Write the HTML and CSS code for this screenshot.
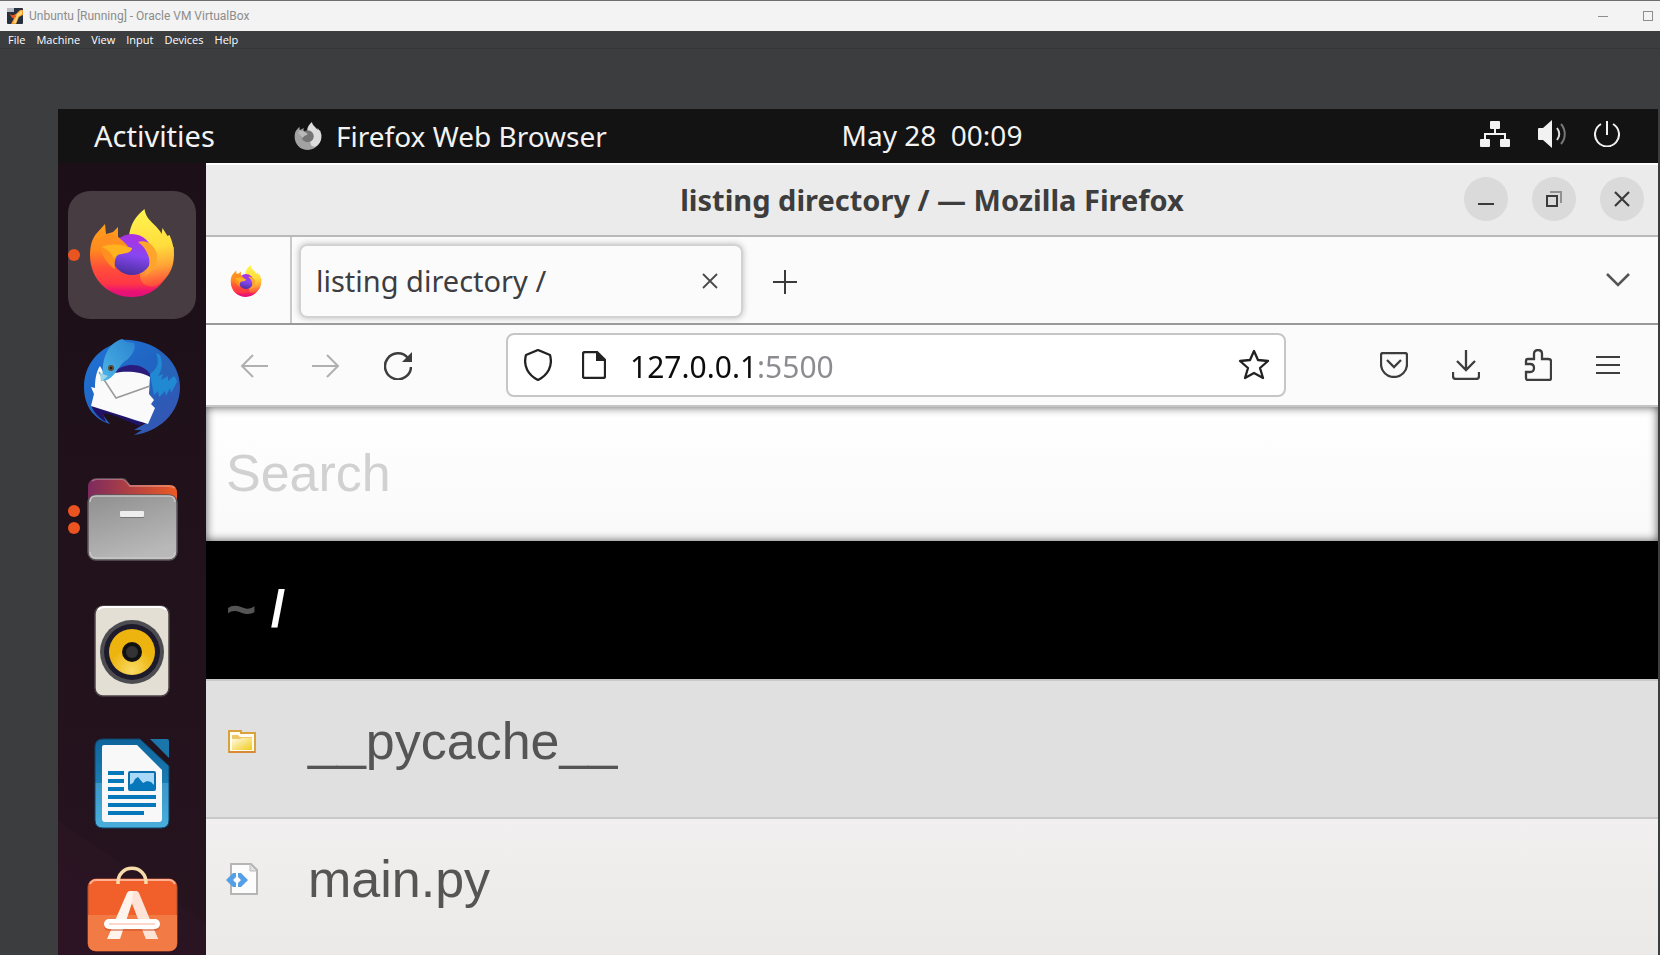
FILE: index.html
```html
<!DOCTYPE html>
<html lang="en">
<head>
<meta charset="utf-8">
<title>Unbuntu [Running] - Oracle VM VirtualBox</title>
<link rel="stylesheet" href="styles.css">
</head>
<body>
<svg class="defs" width="0" height="0" aria-hidden="true">
  <defs>
    <linearGradient id="ff-body" x1="0" y1="0" x2="0" y2="1"><stop offset="0" stop-color="#ffa01c"/><stop offset=".35" stop-color="#ff8a1f"/><stop offset=".6" stop-color="#ff5038"/><stop offset=".82" stop-color="#ff3647"/><stop offset=".92" stop-color="#ea1272"/><stop offset="1" stop-color="#e3107c"/></linearGradient>
    <linearGradient id="ff-flame" x1="0.4" y1="0" x2="0.5" y2="1"><stop offset="0" stop-color="#fff44f"/><stop offset=".5" stop-color="#ffdd3c"/><stop offset=".75" stop-color="#ffa636"/><stop offset="1" stop-color="#ff4a3c"/></linearGradient>
    <linearGradient id="ff-globe" x1="0.6" y1="0" x2="0.4" y2="1"><stop offset="0" stop-color="#b12fe0"/><stop offset=".5" stop-color="#8746f2"/><stop offset="1" stop-color="#4a2f9c"/></linearGradient>
    <symbol id="firefox" viewBox="20 16 88 92">
      <path fill="url(#ff-body)" d="M64 106C40 106 22 88 22 64c0-9 2-16 6-21l9-10 1 10c3-1 5-1 7-2l5-5v10l14 10h42c0 29-18 50-42 50z"/>
      <path fill="url(#ff-flame)" d="M61 46c1-13 7-21 15.500-28 1 7 4 10 9 15 4 4 7 7 8 10l1-6 5 8 2-1c3 7 4.500 13 4.500 20 0 14-7 25-18 31-10 2-16-3-16-11z"/>
      <circle cx="64" cy="63.500" r="20.500" fill="url(#ff-globe)"/>
      <path fill="#ffa52c" d="M70 51c9-3 17 4 19 12 1 9-4 18-13 22 6-7 7-16 3-23-2-5-5-8-9-11z"/>
      <path fill="#ff901f" d="M30 50c5-8 13-8 20-4 4 3 7 6 10 9l-9 7c-4 4-5 10-4 16-9-5-14-16-17-28z"/>
      <path fill="#ffb320" d="M34 56c5-3 13-3 20-2l10 3c0 4-5 5-10 6-4 0-6 2-8 5-2-5-5-9-12-12z"/>
    </symbol>
  </defs>
</svg>

<div class="host">
  <header class="host-title">
    <svg class="host-logo" viewBox="0 0 16 16" aria-hidden="true"><rect width="16" height="16" rx="1" fill="#26303f"/><path d="M0 0h7v4H0z" fill="#b9bcc2"/><path d="M2 5c2 3 5 3 7 1l4-4h3v5l-4 2-3 7H4l3-6z" fill="#f39a2c"/><path d="M10 6l5-4v4l-4 3-2 6H6l3-6z" fill="#ffd27a"/><path d="M2 5c2 3 5 3 6 1l1 3-4 1z" fill="#e8541e"/></svg>
    <span class="host-name">Unbuntu [Running] - Oracle VM VirtualBox</span>
    <button class="host-btn" aria-label="Minimize window"><svg width="10" height="10" viewBox="0 0 10 10"><path d="M0 5.500h10" stroke="#8d8d8d"/></svg></button>
    <button class="host-btn" aria-label="Maximize window"><svg width="10" height="10" viewBox="0 0 10 10"><rect x=".5" y=".5" width="9" height="9" fill="none" stroke="#8d8d8d"/></svg></button>
  </header>
  <nav class="host-menu">
    <button>File</button><button>Machine</button><button>View</button><button>Input</button><button>Devices</button><button>Help</button>
  </nav>

  <main class="vm">
    <div class="topbar">
      <button class="activities">Activities</button>
      <button class="app-menu">
        <svg width="28" height="30" viewBox="20 16 88 92" aria-hidden="true"><path fill="#a2a2a2" d="M64 106C40 106 22 88 22 64c0-9 2-16 6-21l9-10 1 10c3-1 5-1 7-2l5-5v10l14 10h42c0 29-18 50-42 50z"/><path fill="#dcdcdc" d="M61 46c1-13 7-21 15.500-28 1 7 4 10 9 15 4 4 7 7 8 10l1-6 5 8 2-1c3 7 4.500 13 4.500 20 0 14-7 25-18 31-10 2-16-3-16-11z"/><circle cx="63" cy="63" r="19" fill="#747474"/><path fill="#b9b9b9" d="M32 52c6-8 13-7 20-4l11 7c0 5-12 4-16 14-3-5-7-10-15-17z"/></svg>
        <span>Firefox Web Browser</span>
      </button>
      <time class="clock">May 28&nbsp; 00:09</time>
      <div class="status">
        <svg width="30" height="26" viewBox="0 0 30 26" role="img" aria-label="Network"><path fill="#f2f2f2" d="M11 0h8a1 1 0 0 1 1 1v6a1 1 0 0 1-1 1h-3v4h10v6h3a1 1 0 0 1 1 1v6a1 1 0 0 1-1 1h-8a1 1 0 0 1-1-1v-6a1 1 0 0 1 1-1h3v-4H6v4h3a1 1 0 0 1 1 1v6a1 1 0 0 1-1 1H1a1 1 0 0 1-1-1v-6a1 1 0 0 1 1-1h3v-6h10V8h-3a1 1 0 0 1-1-1V1a1 1 0 0 1 1-1z"/></svg>
        <svg width="28" height="28" viewBox="0 0 28 28" role="img" aria-label="Volume"><path fill="#f2f2f2" d="M1 8h4l9-8v28l-9-8H1a1 1 0 0 1-1-1V9a1 1 0 0 1 1-1z"/><path d="M19 8c3 4 3 8 0 12" fill="none" stroke="#ddd" stroke-width="2"/><path d="M23 4c5 6 5 14 0 20" fill="none" stroke="#777" stroke-width="2"/></svg>
        <svg width="26" height="26" viewBox="0 0 26 26" role="img" aria-label="Power"><path d="M7 3a12 12 0 1 0 12 0M13 0v14" fill="none" stroke="#f2f2f2" stroke-width="2"/></svg>
      </div>
    </div>

    <div class="desktop">
      <aside class="dock">
        <button class="dock-item active" aria-label="Firefox">
          <span class="dots"><i></i></span>
          <svg width="128" height="128" viewBox="0 0 128 128"><use href="#firefox" x="20" y="16" width="88" height="92"/></svg>
        </button>
        <button class="dock-item" aria-label="Thunderbird">
          <svg width="128" height="128" viewBox="0 0 128 128">
            <defs><linearGradient id="tb" x1="0" y1="0" x2="1" y2="1"><stop offset="0" stop-color="#1f75d8"/><stop offset=".5" stop-color="#2163c0"/><stop offset="1" stop-color="#3a52ad"/></linearGradient><linearGradient id="tbh" x1="1" y1="0" x2="0" y2="1"><stop offset="0" stop-color="#2a83cf"/><stop offset="1" stop-color="#4cb4e6"/></linearGradient></defs>
            <path fill="url(#tb)" d="M53 17c30-2 59 18 59 47 0 27-22 45-46 48l8-5h-8l12-7c-20-2-30-8-46-16 2 7 5 11 10 17C25 96 16 82 16 64c0-22 14-38 33-44z"/>
            <path fill="#211265" d="M23 82c10 4 24 6 36 12 8 4 14 6 20 4l-8 5C52 95 42 90 35 91l3 8c-7-4-12-9-15-17z"/>
            <path fill="#2b1b7c" d="M46 49c12-11 30-8 36 2v13L60 54z"/>
            <path fill="#fafafa" d="M32 43l6 11c9-7 33-7 44 0l-1 17 5 6-3 4 4 4-7 16-57-18 3-12-3-7 4 1c0-8 1-16 5-22z"/>
            <path d="M31 49l17 26 34-12" fill="none" stroke="#999" stroke-width="1.500"/>
            <path fill="url(#tbh)" d="M35 58c-2-20 3-37 19-42l5 3 7 1c3 6-3 13-7 17-9 4-11 19-24 21z"/>
            <path fill="#9ad5ea" d="M32 50l8 3-7 6z"/>
            <circle cx="43" cy="45" r="3" fill="#5a4b35"/><circle cx="43" cy="45" r="1" fill="#111"/>
            <path fill="#2188d2" d="M88 30c4 10 1 16-6 21l2 11 2 10 4-4 1 6 6-6 1 5 4-8 1 5 6-11c-3-16-9-25-21-29z"/>
            <path fill="#2763b9" d="M88 26c8 9 7 20 2 27l5-2-2 6 7-4v5l6-5 5 7c-2-15-10-27-23-34z"/>
          </svg>
        </button>
        <button class="dock-item" aria-label="Files">
          <span class="dots"><i></i><i></i></span>
          <svg width="128" height="128" viewBox="0 0 128 128">
            <defs><linearGradient id="fb" x1="0" x2="1"><stop offset="0" stop-color="#7c2a5e"/><stop offset="1" stop-color="#ec5a24"/></linearGradient><linearGradient id="fg" x1="0" y1="0" x2=".4" y2="1"><stop offset="0" stop-color="#8f8f8f"/><stop offset="1" stop-color="#b8b8b8"/></linearGradient></defs>
            <path fill="url(#fb)" d="M20 32q0-8 8-8h26q3 0 5 3l3 3h39q8 0 8 8v22H20z"/><path d="M24 26q2-2 5-2h25q3 0 5 3l3 4h39q4 0 6 2" fill="none" stroke="#fff" stroke-opacity=".25" stroke-width="2"/>
            <rect x="20" y="40" width="89" height="65" rx="8" fill="url(#fg)" stroke="#5c5759" stroke-width="1.500"/>
            <path d="M22 47q0-6 6-6h73q6 0 6 6M22 97q0 6 6 6h73q6 0 6-6" fill="none" stroke="#c8c8c8" stroke-width="1.500"/>
            <rect x="52" y="57" width="24" height="6" rx="1" fill="#777"/><rect x="52" y="56" width="24" height="6" rx="1" fill="#eee"/>
          </svg>
        </button>
        <button class="dock-item" aria-label="Rhythmbox">
          <svg width="128" height="128" viewBox="0 0 128 128">
            <defs><radialGradient id="rb" cy=".9"><stop offset="0" stop-color="#fadb63"/><stop offset="1" stop-color="#edb40f"/></radialGradient></defs>
            <rect x="27" y="19" width="74" height="90" rx="8" fill="#e4dfd5" stroke="#4d4447" stroke-width="1.500"/><path d="M30 23q2-3 6-3h56q4 0 6 3" fill="none" stroke="#fff" stroke-width="2"/>
            <circle cx="64" cy="65" r="32" fill="#4d4d51"/><circle cx="64" cy="65" r="28" fill="#1d1b2b"/><circle cx="64" cy="65" r="23" fill="url(#rb)"/><circle cx="64" cy="65" r="10" fill="#111"/><circle cx="64" cy="65" r="6" fill="#333"/>
          </svg>
        </button>
        <button class="dock-item" aria-label="LibreOffice Writer">
          <svg width="128" height="128" viewBox="0 0 128 128">
            <defs><linearGradient id="lo" x1="0" y1="0" x2="0" y2="1"><stop offset="0" stop-color="#0e649b"/><stop offset=".5" stop-color="#1c7cb3"/><stop offset=".5" stop-color="#3b97c9"/><stop offset="1" stop-color="#4aaedd"/></linearGradient></defs>
            <path fill="url(#lo)" stroke="#0d4468" d="M35 20h37l29 27v54q0 8-8 8H35q-8 0-8-8V28q0-8 8-8z"/>
            <path fill="#1a75ab" d="M82 20h17q2 0 2 2v17z"/>
            <path fill="#f8f8f8" d="M36 26h33l25 25v49q0 3-3 3H37q-3 0-3-3V28q0-2 2-2z"/>
            <path fill="#0677ba" d="M40 52h16v4H40zM40 60h16v4H40zM40 68h16v4H40zM40 76h48v4H40zM40 84h48v4H40zM40 92h36v4H40z"/>
            <rect x="61" y="53" width="26" height="18" rx="1" fill="#a9d9f7" stroke="#0b6fae" stroke-width="2"/><path fill="#0677ba" d="M61 66l4-2 2-4 3-2 5 6 4-2 4 1 4 4v4H61z"/>
          </svg>
        </button>
        <button class="dock-item" aria-label="Ubuntu Software">
          <svg width="128" height="128" viewBox="0 0 128 128">
            <rect x="20" y="28" width="89" height="72" rx="8" fill="#f1602a" stroke="#b5512f"/><path fill="#f27a45" d="M20 64h89v28q0 8-8 8H28q-8 0-8-8z"/><path d="M22 33q2-4 6-4h73q4 0 6 4" fill="none" stroke="#ffb091" stroke-width="2"/>
            <path d="M50 33c-1-21 29-21 28 0" fill="none" stroke="#f5dcaa" stroke-width="3.500"/>
            <path d="M39 88l20-46q1-2 3-2h5q2 0 3 2l20 46H78L64 52 52 88z" fill="#fff4ec"/><path d="M65 40h3q2 0 3 2l19 46H78L64 52z" fill="#ffe3d6"/>
            <rect x="36" y="69" width="56" height="11" rx="5" fill="#c9502a" opacity=".5"/><rect x="36" y="68" width="56" height="10" rx="5" fill="#fff"/><path d="M41 73h46" stroke="#fbd6c9" stroke-width="2"/>
          </svg>
        </button>
      </aside>

      <section class="browser">
        <header class="win-title">
          <h1>listing directory / — Mozilla Firefox</h1>
          <div class="win-buttons">
            <button aria-label="Minimize"><svg width="16" height="16" viewBox="0 0 16 16"><path d="M0 13h16" stroke="#3b3b3b" stroke-width="2"/></svg></button>
            <button aria-label="Restore"><svg width="16" height="16" viewBox="0 0 16 16" fill="none" stroke-width="2"><path d="M4 1h11v11" stroke="#919191"/><rect x="1" y="5" width="10" height="10" stroke="#3b3b3b"/></svg></button>
            <button aria-label="Close"><svg width="16" height="16" viewBox="0 0 16 16"><path d="M1 1l14 14M15 1L1 15" stroke="#3b3b3b" stroke-width="2.200"/></svg></button>
          </div>
        </header>

        <div class="tabs">
          <button class="pinned" aria-label="Firefox View"><svg width="32" height="34"><use href="#firefox"/></svg></button>
          <div class="tab">
            <span>listing directory /</span>
            <button aria-label="Close tab"><svg width="16" height="16" viewBox="0 0 16 16"><path d="M1 1l14 14M15 1L1 15" stroke="#4a4a4a" stroke-width="1.800"/></svg></button>
          </div>
          <button class="new-tab" aria-label="New tab"><svg width="24" height="24" viewBox="0 0 24 24"><path d="M12 0v24M0 12h24" stroke="#3a3a3a" stroke-width="2"/></svg></button>
          <button class="all-tabs" aria-label="List all tabs"><svg width="24" height="14" viewBox="0 0 24 14"><path d="M1 1l11 11L23 1" fill="none" stroke="#555" stroke-width="2.500"/></svg></button>
        </div>

        <div class="toolbar">
          <div class="nav">
            <button aria-label="Back"><svg width="28" height="24" viewBox="0 0 28 24" fill="none" stroke="#b0b0b0" stroke-width="2"><path d="M28 12H2M13 1L2 12l11 11"/></svg></button>
            <button aria-label="Forward"><svg width="28" height="24" viewBox="0 0 28 24" fill="none" stroke="#b0b0b0" stroke-width="2"><path d="M0 12h26M15 1l11 11-11 11"/></svg></button>
            <button aria-label="Reload"><svg width="28" height="28" viewBox="0 0 28 28"><path d="M24 6A13 13 0 1 0 27 15" fill="none" stroke="#3d3d3d" stroke-width="2.500"/><path d="M28 0v10H18z" fill="#3d3d3d"/></svg></button>
          </div>
          <div class="urlbar">
            <svg width="28" height="32" viewBox="0 0 28 32"><path d="M14 1l12 5c3 11-2 20-12 25C4 26-1 17 2 6z" fill="none" stroke="#222" stroke-width="2.300" stroke-linejoin="round"/></svg>
            <svg width="24" height="28" viewBox="0 0 24 28"><path d="M3 1h12l8 8v16q0 2-2 2H3q-2 0-2-2V3q0-2 2-2z" fill="none" stroke="#222" stroke-width="2.300"/><path d="M14 0l10 10H14z" fill="#222"/></svg>
            <input type="text" value="127.0.0.1:5500" aria-label="Address">
            <button aria-label="Bookmark"><svg width="32" height="32" viewBox="0 0 32 32"><path d="M16 2l4 9 10 1-8 7 3 10-9-5-9 5 3-10-8-7 10-1z" fill="none" stroke="#222" stroke-width="2.300" stroke-linejoin="round"/></svg></button>
          </div>
          <div class="actions">
            <button aria-label="Save to Pocket"><svg width="28" height="26" viewBox="0 0 28 26" fill="none" stroke="#3d3d3d" stroke-width="2.300"><path d="M3 1h22q2 0 2 2v9a13 13 0 0 1-26 0V3q0-2 2-2z"/><path d="M7 8l7 7 7-7"/></svg></button>
            <button aria-label="Downloads"><svg width="28" height="30" viewBox="0 0 28 30" fill="none" stroke="#3d3d3d" stroke-width="2.300"><path d="M14 0v20M5 11l9 9 9-9M1 22v4q0 3 3 3h20q3 0 3-3v-4"/></svg></button>
            <button aria-label="Extensions"><svg width="28" height="32" viewBox="0 0 28 32"><path d="M2 15V12q0-2 2-2h6V5q0-4 4-4t4 4v5h6q3 0 3 2v17q0 2-2 2H4q-2 0-2-2v-6h4q4 0 4-4t-4-4z" fill="none" stroke="#3d3d3d" stroke-width="2.300"/></svg></button>
            <button aria-label="Menu"><svg width="24" height="20" viewBox="0 0 24 20"><path d="M0 2h24M0 10h24M0 18h24" stroke="#3d3d3d" stroke-width="2"/></svg></button>
          </div>
        </div>

        <div class="page">
          <input class="search" type="text" placeholder="Search" aria-label="Search">
          <h2 class="path"><span>~</span> /</h2>
          <ul class="files">
            <li class="dir"><a href="#pycache">
              <svg width="32" height="32" viewBox="0 0 32 32" aria-hidden="true"><defs><linearGradient id="fo" x1="0" y1="0" x2="1" y2="1"><stop offset="0" stop-color="#fffbe8"/><stop offset="1" stop-color="#f2ca18"/></linearGradient></defs><path d="M3 6h12v2h14v19H3z" fill="#fffdf0" stroke="#d9a23a" stroke-width="2"/><path d="M6 10h6l2 2h12v2H6z" fill="#edc768"/><path d="M6 14h8l2-1h10v12H6z" fill="url(#fo)"/><path d="M3 27h26" stroke="#d98a35" stroke-width="2"/></svg>
              <span>__pycache__</span></a></li>
            <li><a href="#main">
              <svg width="32" height="32" viewBox="0 0 32 32" aria-hidden="true"><path d="M5 1h20l6 6v24H5z" fill="#fcfcfc" stroke="#b5b5b5" stroke-width="2"/><path d="M24 1v7h7z" fill="#e2e2e2" stroke="#bbb"/><path d="M0 17l7-7h3v4l-3 3 3 3v4H7zM22 17l-7-7h-3v4l3 3-3 3v4h3z" fill="#559fe6"/></svg>
              <span>main.py</span></a></li>
            <li></li>
          </ul>
        </div>
      </section>
    </div>
  </main>
</div>
</body>
</html>
```
FILE: styles.css
```css
* { box-sizing: border-box; }
body {
  margin: 0;
  height: 100vh;
  overflow: hidden;
  background: #3c3d3f;
  font-family: "Noto Sans", "Open Sans", sans-serif;
}
button {
  margin: 0;
  padding: 0;
  border: 0;
  background: none;
  color: inherit;
  font: inherit;
}
svg { display: block; flex: none; }
.defs { position: absolute; }

.host { height: 100%; display: flex; flex-direction: column; }
.host-title {
  height: 31px;
  flex: none;
  display: flex;
  align-items: center;
  padding: 0 7px;
  border-top: 1px solid #6e6e70;
  background: #f3f3f3;
  color: #8c8c8c;
  font: 12px/16px Roboto, sans-serif;
}
.host-logo { width: 16px; height: 16px; margin-right: 6px; }
.host-name { flex: 1; }
.host-btn { margin-left: 35px; }
.host-menu {
  height: 18px;
  flex: none;
  display: flex;
  gap: 11px;
  padding: 0 8px;
  border-bottom: 1px solid #353638;
  color: #fff;
  font: 11px/18px "Open Sans", sans-serif;
}

.vm {
  flex: 1;
  min-height: 0;
  display: flex;
  flex-direction: column;
  margin: 60px 2px 0 58px;
}
.topbar {
  height: 54px;
  flex: none;
  display: grid;
  grid-template-columns: 148px 1fr auto 1fr;
  align-items: center;
  background: #131313;
  color: #f2f2f2;
  font-size: 28px;
  line-height: 54px;
}
.activities { padding-left: 36px; text-align: left; font-size: 29px; }
.app-menu { display: flex; align-items: center; gap: 14px; padding-left: 88px; white-space: nowrap; }
.clock { padding-bottom: 2px; line-height: 52px; }
.status { display: flex; justify-content: flex-end; align-items: center; gap: 28px; padding: 0 38px 4px 0; }

.desktop { flex: 1; min-height: 0; display: flex; }
.dock {
  width: 148px;
  flex: none;
  display: flex;
  flex-direction: column;
  align-items: center;
  gap: 4px;
  padding-top: 28px;
  overflow: hidden;
  background:
    linear-gradient(35deg, #2d1424 0, #291422 110px, transparent 111px),
    linear-gradient(#1c0f17, #26141f);
}
.dock-item {
  position: relative;
  width: 128px;
  height: 128px;
  flex: none;
  display: flex;
  align-items: center;
  justify-content: center;
  border-radius: 22px;
}
.dock-item.active { background: #483c43; }
.dots {
  position: absolute;
  left: 0;
  top: 0;
  height: 100%;
  display: flex;
  flex-direction: column;
  justify-content: center;
  gap: 5px;
}
.dots i { width: 12px; height: 12px; border-radius: 50%; background: #e95420; }

.browser { flex: 1; min-width: 0; display: flex; flex-direction: column; background: #fbfbfb; }
.win-title {
  height: 74px;
  flex: none;
  display: grid;
  grid-template-columns: 1fr auto 1fr;
  align-items: center;
  border-top: 2px solid #fff;
  border-bottom: 2px solid #b9b9b9;
  background: #ebebeb;
  color: #3d3d3d;
}
.win-title h1 { grid-column: 2; margin: 0; font-size: 29px; line-height: 40px; }
.win-buttons { display: flex; justify-content: flex-end; gap: 24px; padding: 0 14px 2px 0; }
.win-buttons button {
  width: 44px;
  height: 44px;
  display: flex;
  align-items: center;
  justify-content: center;
  border-radius: 50%;
  background: #dadada;
}

.tabs {
  height: 88px;
  flex: none;
  display: flex;
  align-items: center;
  border-bottom: 2px solid #999;
}
.pinned {
  width: 86px;
  align-self: stretch;
  display: flex;
  align-items: center;
  padding: 2px 0 0 24px;
  border-right: 2px solid #c8c8c8;
}
.tab {
  width: 444px;
  height: 74px;
  display: flex;
  align-items: center;
  justify-content: space-between;
  margin: 2px 0 0 7px;
  padding: 0 25px 0 17px;
  border-radius: 8px;
  box-shadow: inset 0 0 0 2px #d2d2d2, 0 0 6px #bbb;
  color: #3d3d42;
  font-size: 29px;
  line-height: 40px;
}
.new-tab { margin: 3px 0 0 30px; }
.all-tabs { margin: 0 28px 0 auto; }

.toolbar {
  height: 82px;
  flex: none;
  display: flex;
  align-items: center;
  border-bottom: 2px solid #c4c4c4;
}
.nav { display: flex; align-items: center; gap: 44px; padding: 2px 0 0 34px; }
.urlbar {
  flex: 1;
  height: 64px;
  display: flex;
  align-items: center;
  margin: 0 94px;
  padding: 0 14px 0 16px;
  border: 2px solid #c6c6c6;
  border-radius: 8px;
  background: #fff;
}
.urlbar svg + svg { margin-left: 30px; }
.urlbar input {
  flex: 1;
  min-width: 0;
  height: 50px;
  margin-left: 24px;
  padding: 2px 0 0;
  border: 0;
  outline: 0;
  background: linear-gradient(90deg, #0c0c0d 127px, #8b8b90 127px);
  background-clip: text;
  -webkit-background-clip: text;
  -webkit-text-fill-color: transparent;
  font: 30px/48px "Noto Sans", sans-serif;
}
.actions { display: flex; align-items: center; gap: 44px; padding-right: 38px; }

.page { flex: 1; min-height: 0; overflow: hidden; font: 52px/60px "Liberation Sans", Arial, sans-serif; }
.search {
  display: block;
  width: 100%;
  height: 134px;
  padding: 0 20px 2px;
  border: 0;
  outline: 0;
  background: linear-gradient(#fff, #f9f9f9);
  box-shadow: inset 0 0 10px #555;
  font: inherit;
}
.search::placeholder { color: #d1d1d1; opacity: 1; }
.path {
  margin: 0;
  padding: 38px 20px 40px;
  background: #000;
  color: #fff;
  font: bold 52px/60px "Liberation Sans", Arial, sans-serif;
}
.path span { color: #555; }
.files { margin: 0; padding: 0; list-style: none; }
.files li { border-top: 2px solid #c9c9c9; background: linear-gradient(#f1efef, #ebeae8); }
.files .dir { background: #e0e0e0; }
.files a {
  display: flex;
  align-items: center;
  gap: 50px;
  padding: 30px 20px 46px;
  color: #555;
  text-decoration: none;
}
```
